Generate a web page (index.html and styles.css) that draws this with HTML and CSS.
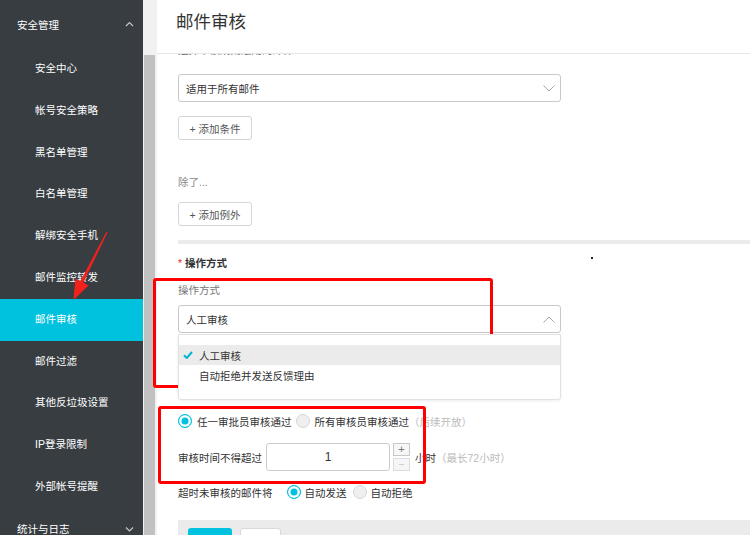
FILE: index.html
```html
<!DOCTYPE html>
<html lang="zh-CN">
<head>
    <meta charset="UTF-8">
    <meta name="viewport" content="width=device-width, initial-scale=1.0">
    <title>邮件审核</title>
    <link rel="stylesheet" href="styles.css">
</head>
<body>
    <div class="page">
        <nav class="sidebar">
            <div class="group">
                <span>安全管理</span>
                <svg class="caret" width="9" height="6" viewBox="0 0 9 6"><polyline points="1,5 4.5,1.5 8,5" /></svg>
            </div>
            <ul class="menu">
                <li>安全中心</li>
                <li>帐号安全策略</li>
                <li>黑名单管理</li>
                <li>白名单管理</li>
                <li>解绑安全手机</li>
                <li>邮件监控转发</li>
                <li class="active">邮件审核</li>
                <li>邮件过滤</li>
                <li>其他反垃圾设置</li>
                <li>IP登录限制</li>
                <li>外部帐号提醒</li>
            </ul>
            <div class="group group-closed">
                <span>统计与日志</span>
                <svg class="caret" width="9" height="6" viewBox="0 0 9 6"><polyline points="1,1.5 4.5,5 8,1.5" /></svg>
            </div>
        </nav>

        <div class="scrollbar"><div class="thumb"></div></div>

        <main class="main">
            <header class="title-bar">
                <h1>邮件审核</h1>
            </header>

            <div class="content">
                <p class="hint cut">选择审核规则适用的邮件：</p>
                <div class="select first">
                    <span>适用于所有邮件</span>
                    <svg class="chev" width="12" height="7" viewBox="0 0 12 7"><polyline points="0.5,0.5 6,6 11.5,0.5" /></svg>
                </div>
                <button class="btn-add add-cond">+ 添加条件</button>

                <p class="hint except">除了...</p>
                <button class="btn-add add-except">+ 添加例外</button>

                <div class="divider"></div>

                <h3 class="section"><span class="req">*</span>操作方式</h3>
                <p class="hint label">操作方式</p>
                <div class="select-wrap">
                    <div class="select">
                        <span>人工审核</span>
                        <svg class="chev" width="12" height="7" viewBox="0 0 12 7"><polyline points="0.5,6.5 6,1 11.5,6.5" /></svg>
                    </div>
                    <ul class="dropdown">
                        <li class="selected">
                            <svg class="check" width="10" height="8" viewBox="0 0 10 8"><polyline points="1,4.2 3.8,7 9,1" /></svg>
                            人工审核
                        </li>
                        <li>自动拒绝并发送反馈理由</li>
                    </ul>
                </div>

                <div class="row approvers">
                    <span class="radio on"></span>
                    <span class="opt">任一审批员审核通过</span>
                    <span class="radio off"></span>
                    <span class="opt">所有审核员审核通过</span>
                    <span class="muted">（后续开放）</span>
                </div>

                <div class="row time-row">
                    <span>审核时间不得超过</span>
                    <div class="num-input">1</div>
                    <div class="spinner">
                        <span class="spin">+</span>
                        <span class="spin disabled">−</span>
                    </div>
                    <span class="unit">小时</span>
                    <span class="muted">（最长72小时）</span>
                </div>

                <div class="row timeout">
                    <span>超时未审核的邮件将</span>
                    <span class="radio on first-radio"></span>
                    <span class="opt">自动发送</span>
                    <span class="radio off"></span>
                    <span class="opt">自动拒绝</span>
                </div>

                <div class="footer">
                    <button class="btn-primary"></button>
                    <button class="btn-default"></button>
                </div>
            </div>
        </main>
    </div>

    <!-- annotations drawn over the screenshot -->
    <div class="mark mark-1"></div>
    <div class="mark mark-2"></div>
    <svg class="arrow" width="750" height="535" viewBox="0 0 750 535">
        <polygon points="107.6,232.3 83.4,282.6 88.6,285.4 73.5,300 75.4,278.6 80.4,281.2 106.4,231.7" />
        <rect x="591" y="257" width="2" height="2" fill="#222" />
    </svg>
</body>
</html>
```

FILE: styles.css
```css
* {
    box-sizing: border-box;
}
body {
    margin: 0;
    font-family: "Liberation Sans", "Noto Sans CJK SC", sans-serif;
    font-size: 10.5px;
    color: #333;
    background: #fff;
}
ul {
    list-style: none;
    margin: 0;
    padding: 0;
}
p, h1, h3 {
    margin: 0;
}
button {
    font-family: inherit;
    font-size: inherit;
    cursor: pointer;
}
.page {
    display: flex;
    height: 535px;
    overflow: hidden;
}

/* sidebar */
.sidebar {
    width: 143px;
    flex-shrink: 0;
    background: #373d41;
    color: #fff;
}
.group {
    height: 48px;
    display: flex;
    align-items: center;
    justify-content: space-between;
    padding: 0 9px 0 17px;
}
.group-closed {
    height: 42px;
}
.caret polyline {
    fill: none;
    stroke: #c5c8ca;
    stroke-width: 1.2;
}
.menu li {
    height: 41.8px;
    line-height: 41.8px;
    padding-left: 35px;
}
.menu li.active {
    background: #00c1de;
}

.scrollbar {
    width: 14px;
    flex-shrink: 0;
    background: #f1f1f1;
    padding: 55px 2px 0 1px;
}
.thumb {
    height: 100%;
    background: #c1c1c1;
}

/* main column */
.main {
    flex: 1;
    min-width: 0;
    display: flex;
    flex-direction: column;
}
.title-bar {
    height: 54px;
    flex-shrink: 0;
    border-bottom: 1px solid #e6e6e6;
    padding: 10px 0 0 19px;
}
.title-bar h1 {
    font-size: 17.5px;
    line-height: 24px;
    font-weight: normal;
    color: #333;
}
.content {
    flex: 1;
    overflow: hidden;
    padding-left: 21px;
}
.hint {
    line-height: 16px;
    color: #666;
}
.cut {
    margin-top: -12px;
}
.except {
    margin-top: 34px;
    color: #888;
}
.label {
    margin-top: 11px;
    color: #777;
}

.select {
    width: 383px;
    height: 28px;
    border: 1px solid #c8c8c8;
    border-radius: 3px;
    padding: 0 5px 0 7px;
    display: flex;
    align-items: center;
    justify-content: space-between;
    background: #fff;
}
.select.first {
    margin-top: 16px;
}
.chev polyline {
    fill: none;
    stroke: #a8a8a8;
    stroke-width: 1;
}
.btn-add {
    display: block;
    width: 74px;
    height: 24px;
    padding: 0;
    border: 1px solid #d6d6d6;
    border-radius: 3px;
    background: #fff;
    color: #555;
}
.add-cond {
    margin-top: 14px;
}
.add-except {
    margin-top: 12px;
}
.divider {
    height: 4px;
    margin-top: 14px;
    background: #ebebeb;
}
.section {
    margin-top: 11px;
    font-size: 10.5px;
    line-height: 16px;
    font-weight: bold;
}
.req {
    color: #f5222d;
    font-weight: normal;
    margin-right: 3px;
}

.select-wrap {
    position: relative;
    margin-top: 7px;
}
.dropdown {
    position: absolute;
    top: calc(100% + 1px);
    left: 0;
    width: 383px;
    padding: 10px 0 14px;
    background: #fff;
    border: 1px solid #e2e2e2;
    border-radius: 0 0 3px 3px;
    box-shadow: 0 1px 3px rgba(0, 0, 0, 0.08);
    z-index: 2;
}
.dropdown li {
    display: flex;
    align-items: center;
    height: 20px;
    padding-left: 20px;
}
.dropdown li.selected {
    background: #ebebeb;
    padding-left: 4px;
}
.check {
    margin-right: 6px;
}
.check polyline {
    fill: none;
    stroke: #00b5d3;
    stroke-width: 2;
}

/* radio rows */
.row {
    display: flex;
    align-items: center;
}
.approvers {
    margin-top: 80px;
    height: 16px;
}
.radio {
    width: 14px;
    height: 14px;
    flex-shrink: 0;
    border-radius: 50%;
    border: 1px solid #d6d6d6;
    background: #efefef;
}
.radio.on {
    border-color: #00c1de;
    background: #00c1de;
    box-shadow: inset 0 0 0 2.5px #fff;
}
.approvers .radio {
    margin-right: 5px;
}
.approvers .opt {
    margin-right: 4px;
}
.approvers .muted {
    margin-left: -4px;
}
.muted {
    color: #bbb;
}

.time-row {
    margin-top: 14px;
}
.num-input {
    width: 124px;
    height: 28px;
    margin-left: 4px;
    border: 1px solid #ccc;
    border-radius: 3px;
    line-height: 26px;
    text-align: center;
    font-size: 12px;
}
.spinner {
    display: flex;
    flex-direction: column;
    gap: 2px;
    margin-left: 3px;
}
.spin {
    width: 17px;
    height: 13px;
    border: 1px solid #c8c8c8;
    background: #f6f6f6;
    color: #777;
    font-size: 11px;
    line-height: 10px;
    text-align: center;
}
.spin.disabled {
    border-color: #dcdcdc;
    color: #ccc;
}
.unit {
    margin-left: 5px;
}

.timeout {
    margin-top: 13px;
    height: 16px;
}
.timeout .radio {
    margin-right: 4px;
}
.timeout .first-radio {
    margin-left: 14px;
}
.timeout .opt {
    margin-right: 6px;
}

.footer {
    margin-top: 20px;
    height: 60px;
    padding: 8px 10px;
    background: #ebebeb;
    display: flex;
    align-items: flex-start;
    gap: 8px;
}
.btn-primary {
    width: 44px;
    height: 28px;
    border: none;
    border-radius: 3px;
    background: #00c1de;
}
.btn-default {
    width: 41px;
    height: 28px;
    border: 1px solid #d9d9d9;
    border-radius: 3px;
    background: #fff;
}

/* red annotations */
.mark {
    position: absolute;
    border: 3px solid #ff0000;
    border-radius: 3px;
    pointer-events: none;
}
.mark-1 {
    left: 153px;
    top: 278px;
    width: 340px;
    height: 110px;
}
.mark-2 {
    left: 158px;
    top: 406px;
    width: 268px;
    height: 78px;
}
.arrow {
    position: absolute;
    left: 0;
    top: 0;
    pointer-events: none;
}
.arrow polygon {
    fill: #f2211c;
}
```
